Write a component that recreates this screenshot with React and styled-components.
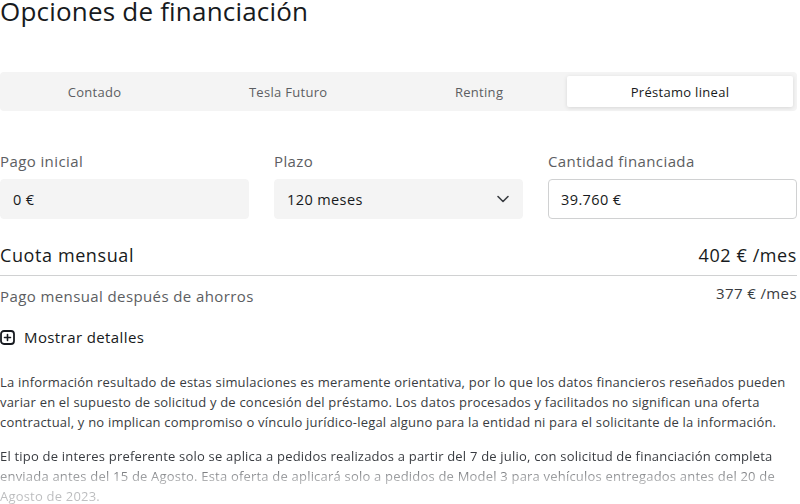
import React, { useState } from "react";
import styled, { createGlobalStyle } from "styled-components";

const GlobalStyle = createGlobalStyle`
  body {
    margin: 0;
    background: #ffffff;
    font-family: "Open Sans", "Noto Sans", sans-serif;
    color: #171a20;
  }
`;

const tabs = ["Contado", "Tesla Futuro", "Renting", "Préstamo lineal"];

const App = () => {
  const [active, setActive] = useState(3);

  return (
    <>
      <GlobalStyle />
      <Page>
        <Title>Opciones de financiación</Title>

        <TabBar>
          {tabs.map((t, i) => (
            <Tab key={t} $active={i === active} onClick={() => setActive(i)}>
              {t}
            </Tab>
          ))}
        </TabBar>

        <Fields>
          <Field>
            <Label>Pago inicial</Label>
            <InputBox>0 €</InputBox>
          </Field>
          <Field>
            <Label>Plazo</Label>
            <InputBox>
              120 meses
              <svg width="14" height="14" viewBox="0 0 14 14" fill="none">
                <path d="M2 4.5l5 5 5-5" stroke="#393c41" strokeWidth="1.6" strokeLinecap="round" strokeLinejoin="round" />
              </svg>
            </InputBox>
          </Field>
          <Field>
            <Label>Cantidad financiada</Label>
            <InputBox $outlined>39.760 €</InputBox>
          </Field>
        </Fields>

        <MainRow>
          <span>Cuota mensual</span>
          <span>402 € /mes</span>
        </MainRow>
        <SubRow>
          <span>Pago mensual después de ahorros</span>
          <SubValue>377 € /mes</SubValue>
        </SubRow>

        <Details>
          <svg width="15" height="15" viewBox="0 0 15 15" fill="none">
            <rect x="1" y="1" width="13" height="13" rx="3" stroke="#171a20" strokeWidth="1.8" />
            <path d="M7.5 4.5v6M4.5 7.5h6" stroke="#171a20" strokeWidth="1.6" strokeLinecap="round" />
          </svg>
          Mostrar detalles
        </Details>

        <Disclaimer>
          La información resultado de estas simulaciones es meramente orientativa, por lo que los datos financieros reseñados pueden variar en el supuesto de solicitud y de concesión del préstamo. Los datos procesados y facilitados no significan una oferta contractual, y no implican compromiso o vínculo jurídico-legal alguno para la entidad ni para el solicitante de la información.
        </Disclaimer>
        <Disclaimer $faded>
          El tipo de interes preferente solo se aplica a pedidos realizados a partir del 7 de julio, con solicitud de financiación completa enviada antes del 15 de Agosto. Esta oferta de aplicará solo a pedidos de Model 3 para vehículos entregados antes del 20 de Agosto de 2023.
        </Disclaimer>
      </Page>
    </>
  );
};

export default App;

const Page = styled.div`
  width: 797px;
  height: 504px;
  overflow: hidden;
`;

const Title = styled.h1`
  margin: 0;
  font-size: 26px;
  line-height: 22px;
  letter-spacing: 0.2px;
  font-weight: 500;
  color: #171a20;
`;

const TabBar = styled.div`
  display: flex;
  margin-top: 50px;
  padding: 4px;
  height: 31px;
  background: #f4f4f4;
  border-radius: 4px;
`;

const Tab = styled.div`
  flex: 1 1 auto;
  display: flex;
  align-items: center;
  justify-content: center;
  font-size: 13px;
  letter-spacing: 0.3px;
  color: ${(p) => (p.$active ? "#171a20" : "#5c5e62")};
  font-weight: ${(p) => (p.$active ? 500 : 400)};
  background: ${(p) => (p.$active ? "#ffffff" : "transparent")};
  border-radius: 2px;
  box-shadow: ${(p) => (p.$active ? "0 1px 4px rgba(0,0,0,0.12)" : "none")};
  cursor: pointer;
`;

const Fields = styled.div`
  display: grid;
  grid-template-columns: repeat(3, 1fr);
  gap: 25px;
  margin-top: 40px;
`;

const Field = styled.div`
  display: flex;
  flex-direction: column;
  gap: 8px;
`;

const Label = styled.label`
  font-size: 15px;
  line-height: 20px;
  letter-spacing: 0.4px;
  color: #5c5e62;
`;

const InputBox = styled.div`
  display: flex;
  align-items: center;
  justify-content: space-between;
  box-sizing: border-box;
  height: 40px;
  padding: 0 12px;
  font-size: 14.5px;
  letter-spacing: 0.4px;
  color: #171a20;
  border-radius: 4px;
  background: ${(p) => (p.$outlined ? "#ffffff" : "#f4f4f4")};
  border: 1px solid ${(p) => (p.$outlined ? "#d0d1d2" : "#f4f4f4")};
`;

const MainRow = styled.div`
  display: flex;
  justify-content: space-between;
  align-items: center;
  margin-top: 24px;
  padding-bottom: 8px;
  border-bottom: 1px solid #d0d1d2;
  font-size: 18px;
  line-height: 24px;
  letter-spacing: 0.6px;
  font-weight: 500;
  color: #171a20;
`;

const SubRow = styled.div`
  display: flex;
  justify-content: space-between;
  align-items: flex-start;
  margin-top: 10px;
  font-size: 15px;
  line-height: 20px;
  letter-spacing: 0.4px;
  color: #5c5e62;
`;

const SubValue = styled.span`
  margin-top: -3px;
  color: #393c41;
`;

const Details = styled.div`
  display: flex;
  align-items: center;
  gap: 9px;
  margin-top: 21px;
  font-size: 15px;
  line-height: 20px;
  letter-spacing: 0.4px;
  color: #171a20;
  cursor: pointer;
`;

const Disclaimer = styled.p`
  margin: 25px 0 0;
  font-size: 13px;
  line-height: 20px;
  letter-spacing: 0.2px;
  color: #393c41;
  & + & {
    margin-top: 14px;
  }
  ${(p) =>
    p.$faded &&
    `
    -webkit-mask-image: linear-gradient(to bottom, #000 0, #000 16px, rgba(0,0,0,0.4) 34px, rgba(0,0,0,0.3) 60px);
    mask-image: linear-gradient(to bottom, #000 0, #000 16px, rgba(0,0,0,0.4) 34px, rgba(0,0,0,0.3) 60px);
  `}
`;
